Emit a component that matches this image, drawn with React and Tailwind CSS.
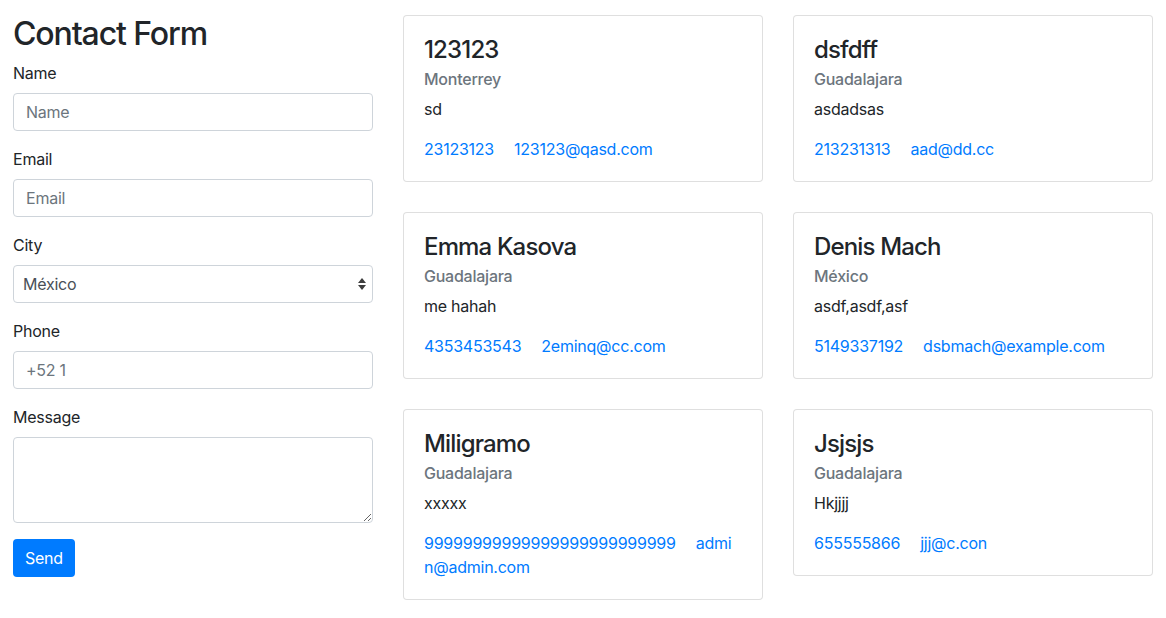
import React from 'react'

const CONTACTS = [
  { name: '123123', city: 'Monterrey', message: 'sd', phone: '23123123', email: '123123@qasd.com' },
  { name: 'dsfdff', city: 'Guadalajara', message: 'asdadsas', phone: '213231313', email: 'aad@dd.cc' },
  { name: 'Emma Kasova', city: 'Guadalajara', message: 'me hahah', phone: '4353453543', email: '2eminq@cc.com' },
  { name: 'Denis Mach', city: 'México', message: 'asdf,asdf,asf', phone: '5149337192', email: 'dsbmach@example.com' },
  { name: 'Miligramo', city: 'Guadalajara', message: 'xxxxx', phone: '99999999999999999999999999', email: 'admin@admin.com', split: 4 },
  { name: 'Jsjsjs', city: 'Guadalajara', message: 'Hkjjjj', phone: '655555866', email: 'jjj@c.con' },
]

const inputCls =
  'block w-full h-[38px] px-3 py-1.5 text-base text-[#495057] bg-white border border-[#ced4da] rounded placeholder:text-[#6c757d] outline-none'

const Field = ({ label, children }) => (
  <div className="mb-4">
    <label className="block mb-2 leading-6">{label}</label>
    {children}
  </div>
)

const ContactCard = ({ c }) => (
  <div className="border border-black/[0.125] rounded bg-white">
    <div className="p-5">
      <h4 className="text-2xl font-medium leading-[1.2] mb-3 tracking-[-0.035em]">{c.name}</h4>
      <h6 className="-mt-[7px] mb-2 text-base font-medium leading-[1.2] text-[#6c757d]">{c.city}</h6>
      <p className="mb-4 leading-6">{c.message}</p>
      <div className="leading-6 text-[#007bff]">
        <a href="#" className="mr-5">{c.phone}</a>
        {c.split ? (
          <a href="#">
            {c.email.slice(0, c.split)}
            <br />
            {c.email.slice(c.split)}
          </a>
        ) : (
          <a href="#">{c.email}</a>
        )}
      </div>
    </div>
  </div>
)

export default function App() {
  return (
    <div
      className="min-h-screen bg-white text-[#212529] text-base tracking-[-0.015em]"
      style={{ fontFamily: 'Inter, "Noto Sans", "Liberation Sans", sans-serif' }}
    >
      <div className="flex gap-[30px] px-[13px] pt-[15px]">
        {/* form */}
        <form className="w-[360px] shrink-0" onSubmit={(e) => e.preventDefault()}>
          <h2 className="text-[32px] font-medium leading-[1.2] mb-2 tracking-[-0.035em]">Contact Form</h2>
          <Field label="Name">
            <input className={inputCls} placeholder="Name" />
          </Field>
          <Field label="Email">
            <input className={inputCls} placeholder="Email" />
          </Field>
          <Field label="City">
            <div className="relative">
              <select className={inputCls + ' appearance-none pl-[9px]'} defaultValue="México">
                <option>Monterrey</option>
                <option>Guadalajara</option>
                <option>México</option>
              </select>
              <svg className="absolute right-[6px] top-[12px] pointer-events-none" width="10" height="14" viewBox="0 0 10 14">
                <path d="M5 1 L9 6 H1 Z" fill="#3d3d3d" />
                <path d="M5 13 L9 8 H1 Z" fill="#3d3d3d" />
              </svg>
            </div>
          </Field>
          <Field label="Phone">
            <input className={inputCls} placeholder="+52 1" />
          </Field>
          <Field label="Message">
            <textarea rows={3} className={inputCls + ' h-[86px]'} />
          </Field>
          <button className="h-[38px] px-3 rounded bg-[#007bff] text-white leading-6">Send</button>
        </form>

        {/* contacts */}
        <div className="grid grid-cols-[360px_360px] gap-x-[30px] gap-y-[30px] items-start">
          {CONTACTS.map((c) => (
            <ContactCard key={c.name} c={c} />
          ))}
        </div>
      </div>
    </div>
  )
}
